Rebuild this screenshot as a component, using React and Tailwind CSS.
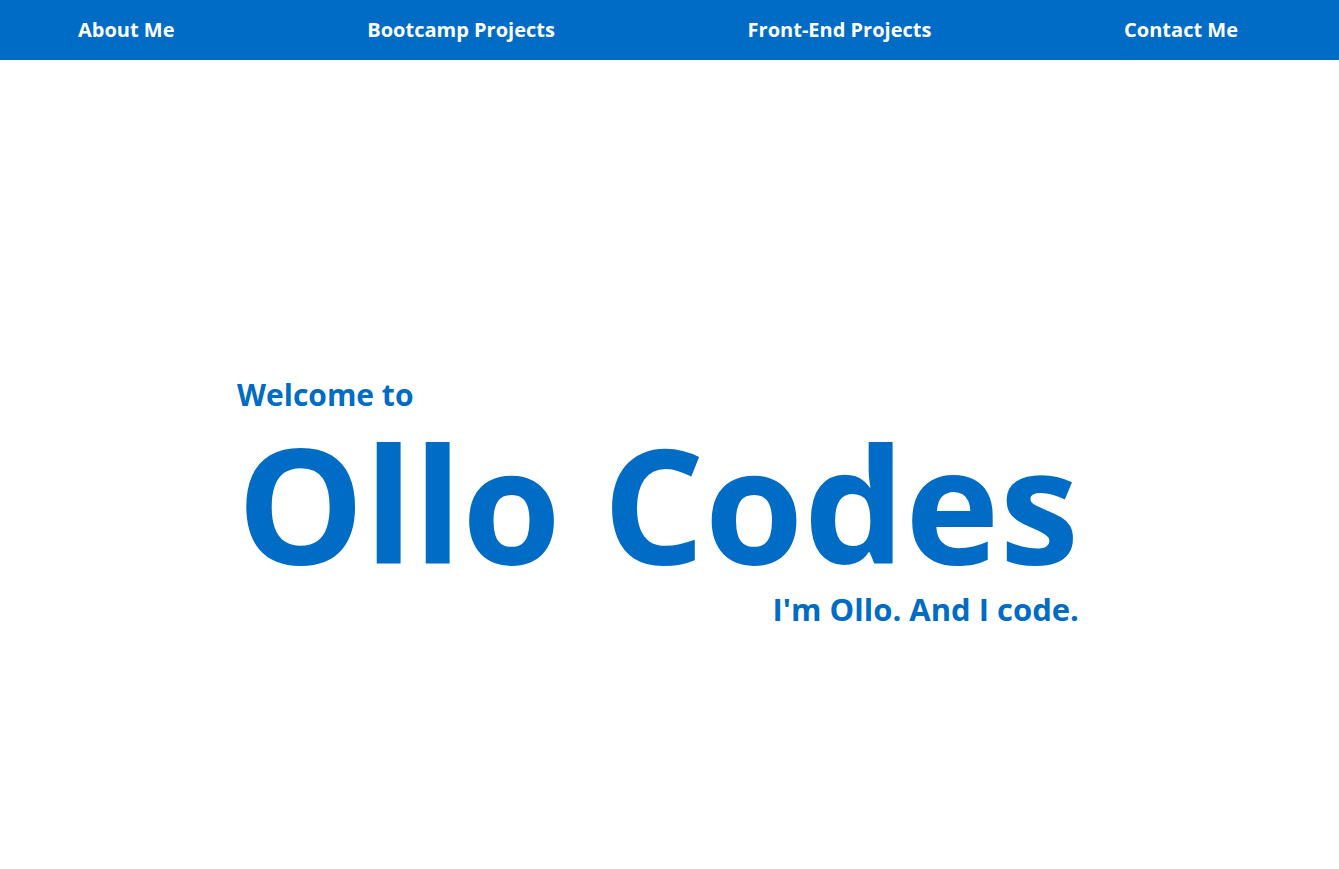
import React from 'react';

const links = ['About Me', 'Bootcamp Projects', 'Front-End Projects', 'Contact Me'];

const App = () => {
    return (
        <div className="min-h-screen bg-white" style={{ fontFamily: '"Open Sans", sans-serif' }}>
            <nav className="h-[60px] bg-[#006cc5] flex items-center justify-between pl-[78px] pr-[101px]">
                {links.map(link => (
                    <a key={link} href="#" className="text-white text-[20px] font-bold">
                        {link}
                    </a>
                ))}
            </nav>
            <main className="pt-[318px] pl-[237px]">
                <div className="w-fit flex flex-col text-[#006cc5] font-bold">
                    <h2 className="text-[30px] leading-[34px]">Welcome to</h2>
                    <h1 className="text-[160px] leading-[180px]">Ollo Codes</h1>
                    <p className="text-[31px] leading-[40px] self-end -mt-[3px]">I'm Ollo. And I code.</p>
                </div>
            </main>
        </div>
    );
};

export default App;
